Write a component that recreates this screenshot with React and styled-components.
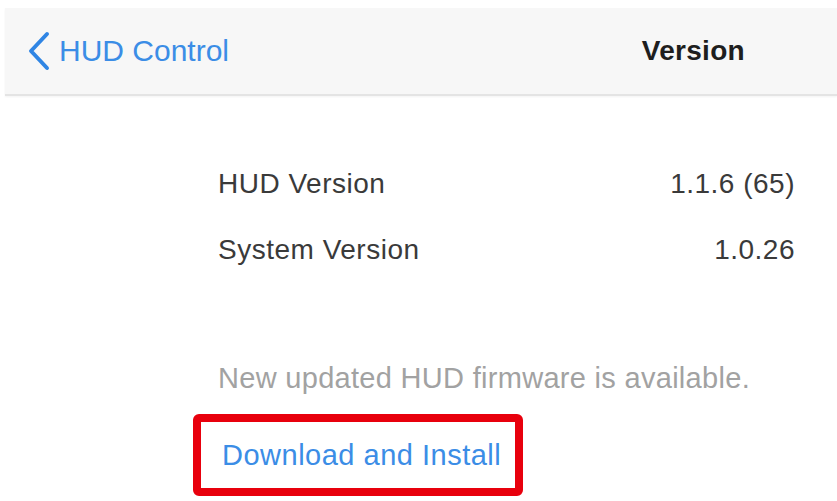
import React from 'react'
import styled, { createGlobalStyle } from 'styled-components'

const GlobalStyle = createGlobalStyle`
  html, body {
    margin: 0;
    padding: 0;
    background: #ffffff;
  }
  body {
    font-family: 'Liberation Sans', Arial, sans-serif;
  }
`

const Screen = styled.div`
  width: 837px;
  height: 501px;
  padding: 8px 0 0 5px;
  box-sizing: border-box;
  overflow: hidden;
  background: #ffffff;
`

const NavBar = styled.div`
  height: 86px;
  display: flex;
  align-items: center;
  background: #f7f7f7;
  border-bottom: 2px solid #e4e4e4;
  box-shadow: 0 1px 2px rgba(0, 0, 0, 0.05);
`

const BackLink = styled.a`
  display: flex;
  align-items: center;
  gap: 8px;
  margin-left: 22px;
  color: #3b8de6;
  font-size: 30px;
  text-decoration: none;
  cursor: pointer;
`

const Title = styled.div`
  margin-left: auto;
  margin-right: 92px;
  font-size: 28px;
  font-weight: bold;
  letter-spacing: 0.3px;
  color: #1e1e1e;
`

const Content = styled.div`
  padding: 55px 42px 0 213px;
`

const InfoRow = styled.div`
  height: 66px;
  display: flex;
  align-items: center;
  justify-content: space-between;
  font-size: 28px;
  letter-spacing: 0.5px;
  color: #3a3a3a;
`

const Notice = styled.p`
  margin: 80px 0 0;
  line-height: 30px;
  font-size: 29px;
  letter-spacing: 0.3px;
  color: #a2a2a2;
`

const DownloadBox = styled.div`
  width: 330px;
  height: 82px;
  margin: 21px 0 0 -25px;
  padding-left: 21px;
  box-sizing: border-box;
  display: flex;
  align-items: center;
  border: 8px solid #e8000d;
  border-radius: 6px;
`

const DownloadLink = styled.a`
  color: #3b8de6;
  font-size: 29px;
  letter-spacing: 0.5px;
  text-decoration: none;
  cursor: pointer;
`

const Chevron = () => (
  <svg width="24" height="40" viewBox="0 0 24 40">
    <polyline
      points="20,3 4,20 20,37"
      fill="none"
      stroke="#2f85e4"
      strokeWidth="4"
      strokeLinecap="round"
      strokeLinejoin="round"
    />
  </svg>
)

const versions = [
  { label: 'HUD Version', value: '1.1.6 (65)' },
  { label: 'System Version', value: '1.0.26' },
]

const App = () => (
  <>
    <GlobalStyle />
    <Screen>
      <NavBar>
        <BackLink>
          <Chevron />
          HUD Control
        </BackLink>
        <Title>Version</Title>
      </NavBar>
      <Content>
        {versions.map(v => (
          <InfoRow key={v.label}>
            <span>{v.label}</span>
            <span>{v.value}</span>
          </InfoRow>
        ))}
        <Notice>New updated HUD firmware is available.</Notice>
        <DownloadBox>
          <DownloadLink>Download and Install</DownloadLink>
        </DownloadBox>
      </Content>
    </Screen>
  </>
)

export default App
